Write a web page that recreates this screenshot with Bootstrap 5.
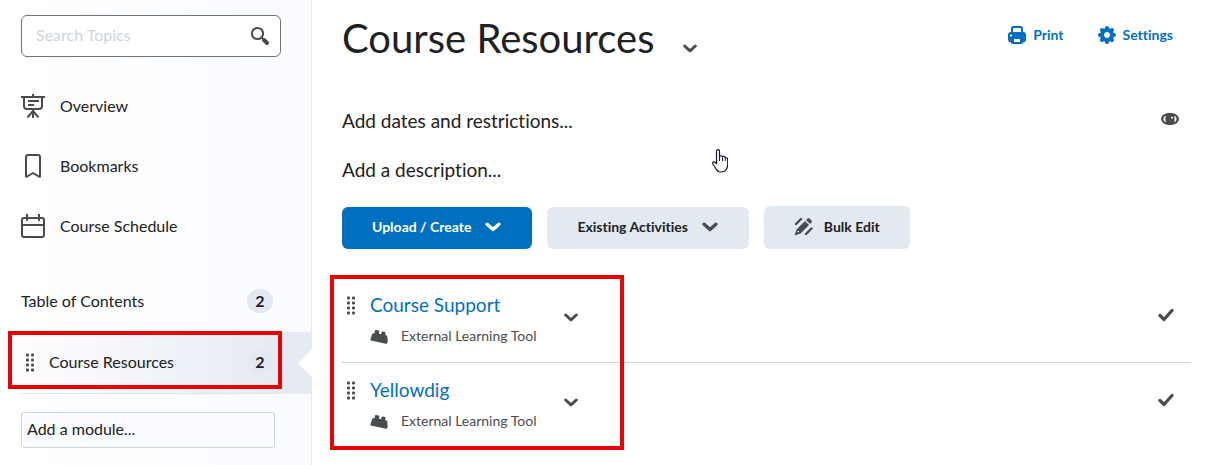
<!DOCTYPE html>
<html lang="en">
<head>
<meta charset="utf-8">
<meta name="viewport" content="width=device-width, initial-scale=1">
<title>Course Resources</title>
<link href="https://cdn.jsdelivr.net/npm/bootstrap@5.3.0/dist/css/bootstrap.min.css" rel="stylesheet">
<style>
  :root { --ink: #202122; --icon: #494c4e; --blue: #006fbf; --pale: #e3e9f1; --line: #cdd5dc; --mark: #e90303; }
  body { font-family: Lato, "Liberation Sans", sans-serif; font-size: 16px; line-height: 24px; color: var(--ink); background: #fff; }
  body, button, input { font-variant-ligatures: none; }
  svg { display: block; flex: none; }
  a { text-decoration: none; }
  .sidebar { flex: 0 0 312px; border-right: 1px solid #e3e9f1; background: linear-gradient(90deg, #fff, #f9fbff); }
  .search-area { padding: 15px 30px 19px 21px; }
  .search-box { height: 42px; border: 1px solid #6e7376; border-radius: 6px; background: #fff; padding: 0 10px 0 14px; }
  .search-box input { border: 0; outline: 0; background: none; min-width: 0; padding: 0 0 2px; color: var(--ink); }
  .search-box input::placeholder { color: #cdd5dc; opacity: 1; }
  .side-link { height: 60px; padding-left: 21px; gap: 15px; color: var(--ink); }
  .toc-row { height: 62px; padding: 0 38px 0 21px; color: var(--ink); }
  .toc-row.first { margin-top: 14px; }
  .count { width: 26px; height: 24px; border-radius: 12px; background: var(--pale); font-weight: 700; line-height: 23px; text-align: center; }
  .toc-row.current { background: linear-gradient(90deg, #fff 0, #e6eaf3 280px); padding: 0 38px 2px 25px; gap: 15px; }
  .current::before { content: ""; position: absolute; left: 21px; right: 30px; bottom: 0; height: 1px; background: #dfe5ee; }
  .current::after { content: ""; position: absolute; right: -1px; top: 50%; margin-top: -14px; border: 14px solid transparent; border-left: 0; border-right-color: #fff; }
  .frame-mark { position: absolute; border: 4px solid var(--mark); pointer-events: none; z-index: 1; }
  .current .frame-mark { inset: -1px 29px 5px 8px; }
  .add-area { padding: 18px 36px 17px 21px; }
  .add-box { height: 36px; border: 1px solid var(--line); border-radius: 3px; padding: 0 5px 3px; background: #fbfcff; color: var(--ink); outline: 0; }
  .add-box::placeholder { color: var(--ink); opacity: 1; }
  .content-area { padding: 0 22px 0 30px; min-width: 0; }
  .title-row { height: 76px; }
  h1 { font-size: 40px; line-height: 48px; font-weight: 400; }
  .title-menu { margin: 20px 0 0 28px; }
  .plain-btn { border: 0; background: none; padding: 0; color: var(--icon); }
  .tool-links { gap: 34px; padding-right: 18px; margin-bottom: 6px; }
  .tool-link { color: var(--blue); font-size: 14px; line-height: 20px; font-weight: 700; gap: 7px; }
  .prompt-line { font-size: 19px; line-height: 28px; padding-top: 31px; }
  .prompt-second { margin-top: 21px; }
  .pointer-hand { position: absolute; left: 370px; top: 73px; }
  .actions { gap: 15px; margin-top: 22px; }
  .act-btn { height: 42px; padding: 0 31px 2px 30px; border-radius: 6px; font-size: 14px; font-weight: 700; line-height: 20px; border: 0; background: var(--pale); color: var(--ink); gap: 14px; }
  .act-btn.main-act { background: var(--blue); color: #fff; }
  .act-btn.bulk { height: 43px; padding: 0 30px 2px; gap: 11px; }
  .topic-list { margin-top: 29px; }
  .topic-list .frame-mark { left: -12px; top: -3px; width: 294px; bottom: -2px; }
  .topic { height: 85px; padding: 14px 17px 0 4px; gap: 15px; }
  .topic:first-child { border-bottom: 1px solid var(--line); }
  .topic-text { width: 179px; }
  .topic-title { font-size: 19px; line-height: 26px; color: var(--blue); }
  .topic-kind { font-size: 14px; line-height: 20px; color: var(--icon); gap: 13px; margin-top: 8px; }
</style>
</head>
<body>
<svg width="0" height="0" class="position-absolute" aria-hidden="true">
  <symbol id="chev" viewBox="0 0 14 9"><path d="M1.700 2l5.300 4.800L12.300 2" fill="none" stroke="currentColor" stroke-width="3" stroke-linecap="round" stroke-linejoin="round"/></symbol>
  <symbol id="grip" viewBox="0 0 9 19"><g fill="currentColor"><rect x="1" y=".5" width="3" height="3" rx="1"/><rect x="6" y=".5" width="3" height="3" rx="1"/><rect x="1" y="5.500" width="3" height="3" rx="1"/><rect x="6" y="5.500" width="3" height="3" rx="1"/><rect x="1" y="10.500" width="3" height="3" rx="1"/><rect x="6" y="10.500" width="3" height="3" rx="1"/><rect x="1" y="15.500" width="3" height="3" rx="1"/><rect x="6" y="15.500" width="3" height="3" rx="1"/></g></symbol>
  <symbol id="brick" viewBox="0 0 18 15"><path d="M2.300 4.600L4.500 4.300 4.900 1.800Q5 .9 6 1l2.600.5q.8.200.7 1L9 4.800l2.200.5.400-2.300q.2-.7 1-.6l2.300.5q.7.200.6 1l-.3 2.100 1.300.4q.7.200.8 1l.4 5-.7 2Q16.400 15 15.600 14.800L1.100 11.500Q.2 11.300.4 10.400z" fill="currentColor"/></symbol>
  <symbol id="tick" viewBox="0 0 16 14"><path d="M2 7.500l4 4L14 2.500" fill="none" stroke="currentColor" stroke-width="3.200" stroke-linecap="round" stroke-linejoin="round"/></symbol>
</svg>
<div class="d-flex min-vh-100">
  <aside class="sidebar">
    <div class="search-area">
      <div class="search-box d-flex align-items-center">
        <input class="flex-grow-1" type="text" placeholder="Search Topics" aria-label="Search Topics">
        <button class="plain-btn" type="button" aria-label="Search"><svg width="20" height="20" viewBox="0 0 20 20" fill="none" stroke="currentColor"><circle cx="7.500" cy="7.500" r="5.600" stroke-width="2"/><path d="M11.500 11.500l2 2" stroke-width="2"/><path d="M14 14l3 3" stroke-width="4" stroke-linecap="round"/></svg></button>
      </div>
    </div>
    <nav>
      <a class="side-link d-flex align-items-center" href="#"><svg width="24" height="24" viewBox="0 0 24 24" fill="none" stroke="#494c4e" stroke-width="2"><path d="M0 3h24M12 0v3M3 3v9q0 3 3 3h12q3 0 3-3V3M7 7h11M7 11h6M12 15v9M12 17l-5.500 6.500M12 17l5.500 6.500"/></svg>Overview</a>
      <a class="side-link d-flex align-items-center" href="#"><svg width="24" height="24" viewBox="0 0 24 24" fill="none" stroke="#494c4e" stroke-width="2" stroke-linejoin="round"><path d="M5 22.500V3q0-2 2-2h10q2 0 2 2v19.500q-.5.500-1.200 0L12 19l-5.800 3.500q-.7.500-1.200 0z"/></svg>Bookmarks</a>
      <a class="side-link d-flex align-items-center" href="#"><svg width="24" height="24" viewBox="0 0 24 24" fill="none" stroke="#494c4e" stroke-width="2"><rect x="1" y="4" width="22" height="19" rx="2"/><path d="M1 11h22M6 0v7M18 0v7"/></svg>Course Schedule</a>
      <a class="toc-row first d-flex align-items-center justify-content-between" href="#"><span>Table of Contents</span><span class="count">2</span></a>
      <a class="toc-row current position-relative d-flex align-items-center" href="#" aria-current="page"><svg width="9" height="19" style="color:#494c4e"><use href="#grip"/></svg><span class="flex-grow-1">Course Resources</span><span class="count">2</span><span class="frame-mark"></span></a>
    </nav>
    <div class="add-area"><input class="add-box w-100" type="text" placeholder="Add a module..." aria-label="Add a module"></div>
  </aside>

  <main class="content-area flex-grow-1">
    <header class="title-row d-flex align-items-center">
      <h1 class="mb-0">Course Resources</h1>
      <button class="plain-btn title-menu" type="button" aria-label="Module actions"><svg width="14" height="9"><use href="#chev"/></svg></button>
      <div class="tool-links d-flex ms-auto">
        <a class="tool-link d-flex align-items-center" href="#"><svg width="18" height="18" viewBox="0 0 18 18"><path d="M4 6V2.500Q4 1 5.500 1h7Q14 1 14 2.500V6" fill="none" stroke="currentColor" stroke-width="2"/><path fill="currentColor" fill-rule="evenodd" d="M3 6H15q3 0 3 3v4q0 3-2.500 3.300Q15 18 13 18H5q-2 0-2.500-1.700Q0 16 0 13V9q0-3 3-3zM3 8.500a1 1 0 1 0 .01 0zM6 13v3h6v-3z"/></svg>Print</a>
        <a class="tool-link d-flex align-items-center" href="#"><svg width="18" height="18" viewBox="0 0 18 18"><path fill="none" stroke="currentColor" stroke-width="4" stroke-linecap="round" d="M9 2v2M9 14v2M2 9h2M14 9h2M4 4l1.500 1.500M12.500 12.500L14 14M14 4l-1.500 1.500M5.500 12.500L4 14"/><circle cx="9" cy="9" r="5" fill="none" stroke="currentColor" stroke-width="4"/></svg>Settings</a>
      </div>
    </header>
    <div class="position-relative prompt-line">
      <div class="d-flex justify-content-between align-items-start">
        <button class="plain-btn text-reset" type="button">Add dates and restrictions...</button>
        <button class="plain-btn me-2 pe-1 pt-1" type="button" aria-label="Visible"><svg width="18" height="16" viewBox="0 -2 18 16"><rect width="18" height="12" rx="8" ry="6" fill="currentColor"/><path d="M4.500 3Q1 6 4.500 9Q3.500 6 4.500 3zM13.500 3q3.500 3 0 6q1-3 0-6z" fill="#fff" stroke="#fff" stroke-width=".6"/><circle cx="11" cy="4.800" r="1" fill="#fff"/></svg></button>
      </div>
      <button class="plain-btn text-reset prompt-second" type="button">Add a description...</button>
      <svg class="pointer-hand" width="16" height="24" viewBox="0 0 16 24"><path d="M4.500 15V2Q4.500.7 6 .7T7.500 2v6.500V7q3-.8 3 1.500V7.500q2.500-.6 2.700 1.500v-.5q2.500 0 2.500 2.500v4q0 8-7 8-3.500 0-5.500-4.500L.8 15Q.2 13 2 12.800q1.500 0 2.500 2.200z" fill="#fff" stroke="#17182c" stroke-width="1.200"/><path d="M7.500 8v4M10.500 8.500V12M13.200 9v3" stroke="#17182c"/></svg>
    </div>
    <div class="actions d-flex flex-wrap align-items-end">
      <button class="act-btn main-act d-flex align-items-center" type="button">Upload / Create<svg width="16" height="10"><use href="#chev"/></svg></button>
      <button class="act-btn d-flex align-items-center" type="button">Existing Activities<svg width="16" height="10" style="color:#494c4e"><use href="#chev"/></svg></button>
      <button class="act-btn bulk d-flex align-items-center" type="button"><svg width="19" height="19" viewBox="0 0 19 19" fill="#494c4e"><path d="M.5 18.500L2.500 12.500 11 4l4 4-8.500 8.500zM12 3l1.500-1.500q1-1 2 0l2 2q1 1 0 2L16 7z"/><path d="M2 7l5-5M12 17l5.500-5.500" stroke="#494c4e" stroke-width="2.400" stroke-linecap="round"/><circle cx="4.200" cy="14.600" r=".8" fill="#fff"/></svg>Bulk Edit</button>
    </div>
    <div class="topic-list position-relative">
      <div class="topic d-flex align-items-start">
        <svg width="9" height="19" class="mt-1" style="color:#494c4e"><use href="#grip"/></svg>
        <div class="topic-text"><a class="topic-title d-block" href="#">Course Support</a><div class="topic-kind d-flex align-items-center text-nowrap"><svg width="18" height="15"><use href="#brick"/></svg>External Learning Tool</div></div>
        <button class="plain-btn pt-3" type="button" aria-label="Course Support actions"><svg width="14" height="19" class="mt-1"><use href="#chev" y="1" width="14" height="9"/></svg></button>
        <svg width="16" height="14" class="ms-auto mt-3" style="color:#494c4e" role="img" aria-label="Completed"><use href="#tick"/></svg>
      </div>
      <div class="topic d-flex align-items-start">
        <svg width="9" height="19" class="mt-1" style="color:#494c4e"><use href="#grip"/></svg>
        <div class="topic-text"><a class="topic-title d-block" href="#">Yellowdig</a><div class="topic-kind d-flex align-items-center text-nowrap"><svg width="18" height="15"><use href="#brick"/></svg>External Learning Tool</div></div>
        <button class="plain-btn pt-3" type="button" aria-label="Yellowdig actions"><svg width="14" height="19" class="mt-1"><use href="#chev" y="1" width="14" height="9"/></svg></button>
        <svg width="16" height="14" class="ms-auto mt-3" style="color:#494c4e" role="img" aria-label="Completed"><use href="#tick"/></svg>
      </div>
      <span class="frame-mark"></span>
    </div>
  </main>
</div>
<script src="https://cdn.jsdelivr.net/npm/bootstrap@5.3.0/dist/js/bootstrap.bundle.min.js"></script>
</body>
</html>
